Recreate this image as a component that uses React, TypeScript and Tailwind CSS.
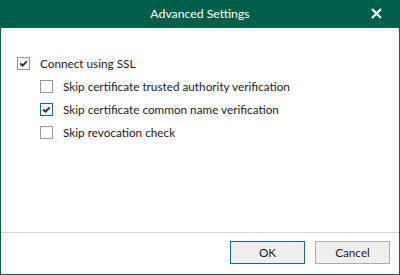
import React from 'react';

type Item = { label: string; checked: boolean; focused?: boolean; indent?: boolean };

const items: Item[] = [
  { label: 'Connect using SSL', checked: true },
  { label: 'Skip certificate trusted authority verification', checked: false, indent: true },
  { label: 'Skip certificate common name verification', checked: true, focused: true, indent: true },
  { label: 'Skip revocation check', checked: false, indent: true },
];

function Box({ checked, focused }: { checked: boolean; focused?: boolean }) {
  return (
    <div
      className={
        'w-[13px] h-[13px] shrink-0 border bg-white flex items-center justify-center ' +
        (focused ? 'border-[#1a63ad]' : 'border-[#9a9a9a]')
      }
    >
      {checked && (
        <svg width="9" height="9" viewBox="0 0 9 9">
          <path d="M1.2 4.4 L3.6 6.6 L7.8 2.4" fill="none" stroke="#333333" strokeWidth="2" />
        </svg>
      )}
    </div>
  );
}

function App() {
  return (
    <div
      className="w-[400px] h-[275px] border border-[#005f4b] bg-white flex flex-col text-[11.75px] text-[#1b1b1b]"
      style={{ fontFamily: 'Lato, sans-serif' }}
    >
      <div className="h-[27px] bg-[#005f4b] relative flex items-center justify-center text-white text-[12.25px]">
        Advanced Settings
        <svg className="absolute right-[17px] top-[7px]" width="11" height="11" viewBox="0 0 11 11">
          <path d="M1 1 L10 10 M10 1 L1 10" stroke="white" strokeWidth="2.2" />
        </svg>
      </div>

      <div className="flex-1 pt-[24px] pl-[16px] flex flex-col">
        {items.map((it) => (
          <div key={it.label} className={'h-[23px] flex items-center gap-[10px] ' + (it.indent ? 'pl-[23px]' : '')}>
            <Box checked={it.checked} focused={it.focused} />
            <span>{it.label}</span>
          </div>
        ))}
      </div>

      <div className="h-[42px] border-t border-[#d4d4d4] flex justify-end items-start gap-[10px] pt-[8px] pr-[9px]">
        <button className="w-[75px] h-[23px] bg-[#efefef] border border-[#1a63ad] flex items-center justify-center">
          OK
        </button>
        <button className="w-[75px] h-[23px] bg-[#efefef] border border-[#adadad] flex items-center justify-center">
          Cancel
        </button>
      </div>
    </div>
  );
}

export default App;
